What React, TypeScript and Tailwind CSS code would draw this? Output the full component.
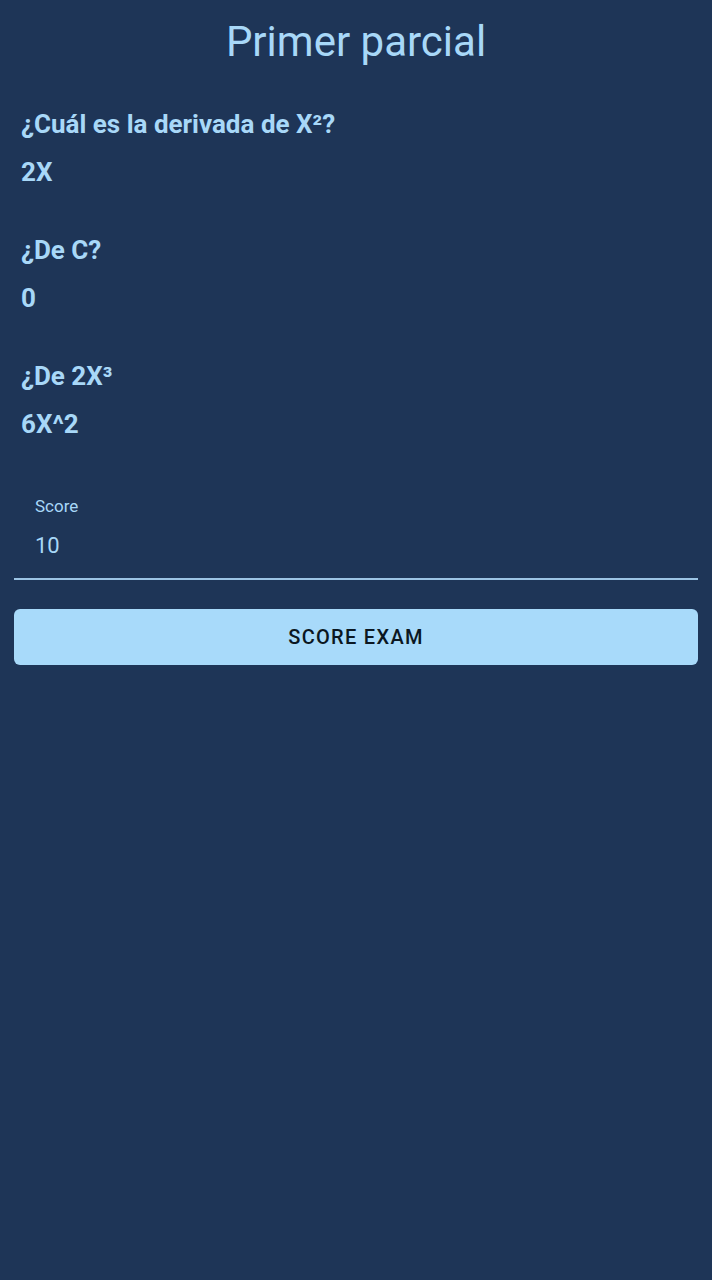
import React from "react";

const qa = [
  { q: "¿Cuál es la derivada de X²?", a: "2X" },
  { q: "¿De C?", a: "0" },
  { q: "¿De 2X³", a: "6X^2" },
];

export default function App() {
  return (
    <div
      className="min-h-[1280px] w-full bg-[#1e3557] text-[#a8d8f8]"
      style={{ fontFamily: "Roboto, 'Noto Sans', sans-serif" }}
    >
      <div className="pt-[18px] text-center text-[42px] leading-[48px] font-normal">
        Primer parcial
      </div>
      <div className="mt-[34px] flex flex-col gap-[30px] px-[21px]">
        {qa.map((item) => (
          <div key={item.q} className="flex flex-col">
            <div className="text-[26px] leading-[48px] font-bold">{item.q}</div>
            <div className="text-[26px] leading-[48px] font-bold">{item.a}</div>
          </div>
        ))}
      </div>
      <div className="mt-[48px] px-[14px]">
        <div className="border-b-2 border-[#9cc4e4] px-[21px] pb-[18px]">
          <div className="text-[17px] leading-[20px] text-[#a8d8f8]">Score</div>
          <div className="mt-[16px] text-[22px] leading-[28px] text-[#a8d8f8]">10</div>
        </div>
        <button className="mt-[29px] flex h-[56px] w-full items-center justify-center rounded-[6px] bg-[#a8dafa] text-[20px] font-medium tracking-[1.3px] text-[#0b1722]">
          SCORE EXAM
        </button>
      </div>
    </div>
  );
}
